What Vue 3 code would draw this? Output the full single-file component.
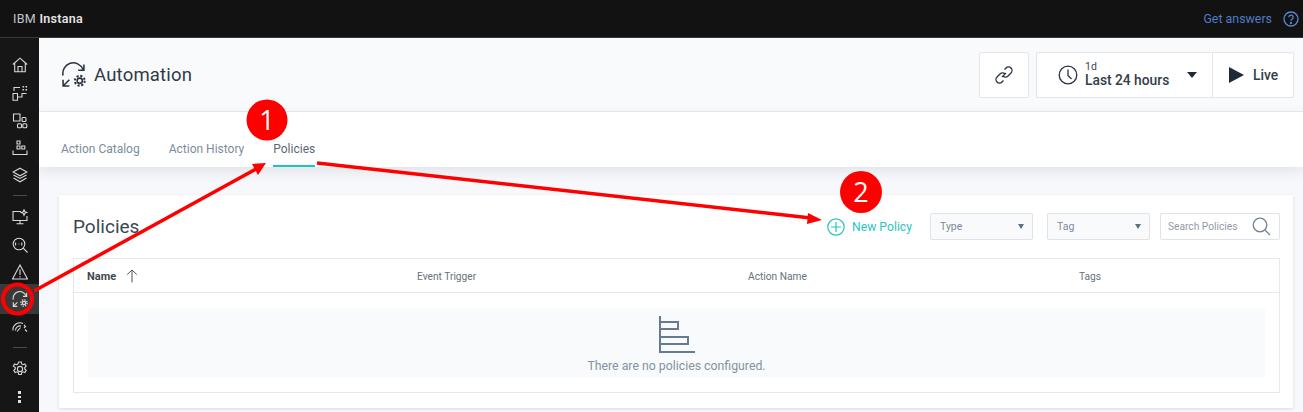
<script setup>
const rows = ['Name', 'Event Trigger', 'Action Name', 'Tags']
</script>

<template>
  <div class="app">
    <header class="topbar">
      <div class="brand">IBM <b>Instana</b></div>
      <div class="answers">
        <span>Get answers</span>
        <svg width="16" height="16" viewBox="0 0 16 16" fill="none" stroke="#5b87d0" stroke-width="1.3">
          <circle cx="8" cy="8" r="7" />
          <path d="M5.9 6.2a2.1 2.1 0 1 1 3.2 1.8c-.8.5-1.1.9-1.1 1.8" />
          <circle cx="8" cy="12" r=".5" fill="#5b87d0" />
        </svg>
      </div>
    </header>
    <div class="body">
      <nav class="side">
        <svg class="ni" viewBox="0 0 16 16"><path d="M.8 7.500 8 1.200 15.200 7.500M2.700 6V14.800H13.300V6M6 14.800V9.500H10V14.800" /></svg>
        <svg class="ni m12" viewBox="0 0 16 16"><path d="M1 8.500H5.500V15.200H1ZM5.500 12H10V8.500H14.500M2 6V2.500H8" /><path class="fillp" d="M10.500 1h1.600v1.600h-1.600zM13.500 1h1.600v1.600h-1.600zM10.500 4h1.600v1.600h-1.600zM13.500 4h1.600v1.600h-1.600z" /></svg>
        <svg class="ni m12" viewBox="0 0 16 16"><path d="M1.500 1H8V8H1.500Z" /><rect x="10" y="4.500" width="4" height="4" rx="1" /><rect x="5.500" y="10.800" width="4" height="4" rx="1" /><rect x="10.800" y="10.800" width="4" height="4" rx="1" /></svg>
        <svg class="ni m11" viewBox="0 0 16 16"><path d="M5 1H8V4H5ZM5 6H8V9H5ZM9.800 6H12.800V9H9.800ZM1 10.500V14.500H15V10.500" /></svg>
        <svg class="ni m11" viewBox="0 0 16 16"><path d="M8 1.200 15 5 8 8.800 1 5ZM1.500 8 8 11.500 14.500 8M1.500 11 8 14.800 14.500 11" /></svg>
        <div class="sep m12"></div>
        <svg class="ni m13" viewBox="0 0 16 16"><path d="M9 2.500H1V11.500H15V7M8 11.500V14.800M4.500 14.800H11.500" /><path d="m12 .8.8 2 2 .7-2 .8-.8 2-.8-2-2-.8 2-.7z" /></svg>
        <svg class="ni m12" viewBox="0 0 16 16"><circle cx="7" cy="7" r="5.800" /><path d="M11.200 11.200 15.500 15.500M3.600 5.500V8.500M6.600 7H7.400M9.800 5.500V8.500" /></svg>
        <svg class="ni m11" viewBox="0 0 16 16"><path d="M8 1 15.500 15H.5ZM8 5.500V11M8 12.300V13.500" /></svg>
        <div class="active">
          <svg class="ni thick" viewBox="0 0 24 24">
            <path d="M2 13A10 10 0 0 1 21 7M22 2.500V8H16.500M8 17 2 23M2 17V23H8" />
            <circle cx="18" cy="18" r="2.500" stroke-width="2" />
            <circle cx="18" cy="18" r="4.700" stroke-width="2" stroke-dasharray="2 1.690" />
          </svg>
        </div>
        <svg class="ni m4" viewBox="0 0 16 16"><path d="M1 12.500A7 7 0 0 1 11 5.500M3.500 12.500A4.500 4.500 0 0 1 9 8M5 13.500 8.500 9.500M12 7l1.500 1.500L12 10M13 11.500l2 2" /></svg>
        <div class="sep m13"></div>
        <svg class="ni m13" viewBox="0 0 16 16"><circle cx="8" cy="8" r="2.600" /><path d="M6.700 1h2.600l.4 2 1.300.7 1.900-.7 1.300 2.200-1.500 1.300v1.500l1.500 1.300-1.300 2.200-1.900-.7-1.300.7-.4 2H6.700l-.4-2-1.300-.7-1.900.7-1.300-2.200 1.500-1.300V6.500L1.300 5.200 2.600 3l1.900.7 1.300-.7z" /></svg>
        <div class="dots"><i></i><i></i><i></i></div>
      </nav>
      <main class="main">
        <section class="head">
          <div class="title">
            <svg class="auto" viewBox="0 0 24 24">
              <path d="M2 13A10 10 0 0 1 21 7M22 2.500V8H16.500M8 17 2 23M2 17V23H8" />
              <circle cx="18" cy="18" r="2.500" stroke-width="1.500" />
              <circle cx="18" cy="18" r="4.700" stroke-width="2" stroke-dasharray="2 1.690" />
            </svg>
            <h1>Automation</h1>
          </div>
          <div class="tools">
            <button class="tbox link">
              <svg width="22" height="22" viewBox="0 0 22 22" fill="none" stroke="#2a3440" stroke-width="1.300">
                <path d="m9 13 4-4M11.500 5.500l1.500-1.500a3.500 3.500 0 0 1 5 5l-3 3a3.500 3.500 0 0 1-5 0M10.500 16.500 9 18a3.500 3.500 0 0 1-5-5l3-3a3.500 3.500 0 0 1 5 0" />
              </svg>
            </button>
            <div class="tbox range">
              <svg width="20" height="20" viewBox="0 0 20 20" fill="none" stroke="#2a3440" stroke-width="1.300">
                <circle cx="10" cy="10" r="8.800" />
                <path d="M10 4.500V10.500L13.500 14" />
              </svg>
              <div class="rtext"><small>1d</small><strong>Last 24 hours</strong></div>
              <span class="caret big"></span>
            </div>
            <div class="tbox live">
              <svg width="16" height="16" viewBox="0 0 16 16"><path d="M1 0 16 8 1 16Z" fill="#1e2a38" /></svg>
              <strong>Live</strong>
            </div>
          </div>
        </section>
        <section class="tabs">
          <a>Action Catalog</a>
          <a>Action History</a>
          <a class="on">Policies</a>
        </section>
        <section class="content">
          <div class="card">
            <div class="cardhead">
              <h2>Policies</h2>
              <div class="filters">
                <a class="new">
                  <svg width="18" height="18" viewBox="0 0 18 18" fill="none" stroke="#22c5c0" stroke-width="1.200">
                    <circle cx="9" cy="9" r="8.200" />
                    <path d="M9 4V14M4 9H14" />
                  </svg>
                  New Policy
                </a>
                <div class="sel w103">Type<span class="caret"></span></div>
                <div class="sel w103 tag">Tag<span class="caret"></span></div>
                <div class="sel search">Search Policies
                  <svg width="19" height="19" viewBox="0 0 19 19" fill="none" stroke="#6f8398" stroke-width="1.300">
                    <circle cx="8" cy="8" r="6.800" />
                    <path d="m13 13 5 5" />
                  </svg>
                </div>
              </div>
            </div>
            <div class="table">
              <div class="thead">
                <div v-for="(r, i) in rows" :key="r" class="th" :class="{ first: i === 0 }">
                  {{ r }}
                  <svg v-if="i === 0" width="12" height="14" viewBox="0 0 12 14" fill="none" stroke="#4a5560" stroke-width="1"><path d="M6 13.500V1M1.200 5.500 6 1l4.800 4.500" /></svg>
                </div>
              </div>
              <div class="tbody">
                <div class="empty">
                  <svg width="38" height="38" viewBox="0 0 38 38" fill="none" stroke="#647b91" stroke-width="2">
                    <path d="M2 0V36H37M2 6H20V13H2M2 21H30V28H2" />
                  </svg>
                  <p>There are no policies configured.</p>
                </div>
              </div>
            </div>
          </div>
        </section>
      </main>
    </div>

    <svg class="overlay" width="1303" height="412" viewBox="0 0 1303 412">
      <circle cx="17.500" cy="299" r="14.500" fill="none" stroke="#ff0000" stroke-width="4" />
      <path d="M34 291 256 169" stroke="#ff0000" stroke-width="3.500" fill="none" />
      <path d="m266 163-14 1 6 11z" fill="#ff0000" />
      <path d="M317 163 811 218" stroke="#ff0000" stroke-width="3.500" fill="none" />
      <path d="m822 220-14-7-1 11z" fill="#ff0000" />
      <circle cx="267" cy="120" r="20.500" fill="#ff0000" />
      <circle cx="861" cy="192" r="21" fill="#ff0000" />
      <text x="267" y="130" class="num">1</text>
      <text x="861" y="202" class="num">2</text>
    </svg>
  </div>
</template>

<style scoped>
.app {
  position: relative;
  width: 1303px;
  height: 412px;
  overflow: hidden;
  font-family: Roboto, "Noto Sans", sans-serif;
  color: #2a3440;
  background: #f7f8fb;
}
.topbar {
  height: 37px;
  background: #121212;
  border-bottom: 1px solid #3a3a3a;
  display: flex;
  align-items: center;
  justify-content: space-between;
  padding: 0 4px 0 13px;
}
.brand { color: #c6c6c6; font-size: 12.500px; letter-spacing: .3px; }
.brand b { color: #e4e4e4; font-weight: 600; }
.answers { display: flex; align-items: center; gap: 11px; color: #4f7cc4; font-size: 12.400px; }
.body { display: flex; height: 374px; }
.side {
  width: 39px;
  flex: none;
  background: #161616;
  display: flex;
  flex-direction: column;
  align-items: center;
  padding-top: 19px;
}
.ni { width: 16px; height: 16px; fill: none; stroke: #d8d8d8; stroke-width: 1.100; flex: none; }
.ni.thick { stroke-width: 1.700; }
.ni .fillp { fill: #d8d8d8; stroke: none; }
.m4 { margin-top: 4px; }
.m11 { margin-top: 11px; }
.m12 { margin-top: 12px; }
.m13 { margin-top: 13px; }
.sep { width: 14px; height: 1px; background: #4a4a4a; flex: none; }
.active {
  width: 39px;
  height: 30px;
  margin-top: 4px;
  background: #393939;
  display: flex;
  align-items: center;
  justify-content: center;
  flex: none;
}
.dots { display: flex; flex-direction: column; gap: 2px; margin-top: 14px; }
.dots i { width: 2.500px; height: 2.500px; background: #e0e0e0; display: block; }
.main { flex: 1; min-width: 0; display: flex; flex-direction: column; }
.head {
  height: 74px;
  flex: none;
  background: #f9fafc;
  border-bottom: 1px solid #e9ebee;
  box-sizing: border-box;
  display: flex;
  align-items: center;
  justify-content: space-between;
  padding: 0 9px 0 22px;
}
.title { display: flex; align-items: center; gap: 8px; }
.auto { width: 25px; height: 25px; fill: none; stroke: #2a3440; stroke-width: 1.500; }
h1 { margin: 0; font-size: 18.500px; font-weight: 400; color: #2f3b47; letter-spacing: .2px; }
.tools { display: flex; gap: 7px; }
.tbox {
  height: 46px;
  box-sizing: border-box;
  background: #fff;
  border: 1px solid #e2e5e9;
  border-radius: 2px;
  display: flex;
  align-items: center;
  padding: 0;
}
.link { width: 50px; justify-content: center; }
.range { width: 176px; padding-left: 21px; gap: 7px; border-right: 0; border-radius: 2px 0 0 2px; }
.rtext { display: flex; flex-direction: column; line-height: 12px; }
.rtext small { font-size: 10.500px; color: #3b4650; }
.rtext strong { font-size: 13.800px; font-weight: 500; color: #323d48; line-height: 15px; }
.caret {
  width: 0;
  height: 0;
  border-left: 3.500px solid transparent;
  border-right: 3.500px solid transparent;
  border-top: 5px solid #5e6f80;
}
.caret.big { border-left-width: 5px; border-right-width: 5px; border-top-width: 6px; border-top-color: #1e2a38; margin-left: 11px; }
.live { width: 82px; margin-left: -7px; gap: 9px; padding-left: 15px; border-radius: 0 2px 2px 0; }
.live strong { font-size: 13.800px; font-weight: 500; color: #323d48; }
.tabs {
  height: 55px;
  flex: none;
  background: #fff;
  display: flex;
  padding-left: 22px;
  gap: 29px;
  box-shadow: 0 4px 12px rgba(30, 40, 60, .1);
  position: relative;
  font-size: 12px;
  color: #7d8c9c;
}
.tabs a { display: flex; align-items: center; height: 55px; box-sizing: border-box; padding-top: 21px; border-bottom: 2px solid transparent; }
.tabs .on { color: #5b6a78; border-bottom-color: #19c5c0; }
.content { flex: 1; padding: 28px 10px 0 20px; }
.card {
  height: 213px;
  box-sizing: border-box;
  background: #fff;
  box-shadow: 0 1px 3px rgba(30, 40, 60, .14);
  padding: 0 13px 0 14px;
}
.cardhead { height: 63px; display: flex; align-items: center; justify-content: space-between; }
h2 { margin: 0; font-size: 19px; font-weight: 400; color: #3a4753; margin-top: -1px; }
.filters { display: flex; align-items: center; gap: 11px; }
.new { display: flex; align-items: center; gap: 7px; color: #2dc4bf; font-size: 12.200px; margin-right: 7px; padding-top: 1px; }
.sel {
  height: 27px;
  box-sizing: border-box;
  background: #f9fafc;
  border: 1px solid #dfe3e7;
  border-radius: 2px;
  display: flex;
  align-items: center;
  justify-content: space-between;
  padding: 0 8px 0 9px;
  font-size: 10.500px;
  color: #7c8a98;
}
.w103 { width: 103px; }
.tag { margin-left: 3px; }
.search { width: 120px; background: #fff; padding: 0 8px 0 7px; margin-left: -1px; color: #8f9ba7; font-size: 10.200px; }
.table { height: 135px; box-sizing: border-box; border: 1px solid #e6e8ea; }
.thead { height: 34px; box-sizing: border-box; border-bottom: 1px solid #e6e8ea; display: grid; grid-template-columns: 330px 331px 331px 1fr; align-items: center; font-size: 10.200px; color: #66727e; padding-top: 1px; }
.th.first { padding-left: 13px; font-weight: 700; color: #3c4854; font-size: 11px; display: flex; align-items: center; gap: 10px; }
.th:nth-child(2) { padding-left: 13px; }
.th:nth-child(3) { padding-left: 13px; }
.th:nth-child(4) { padding-left: 13px; }
.tbody { padding: 15px 14px 0; }
.empty { height: 69px; background: #f9fafc; display: flex; flex-direction: column; align-items: center; padding-top: 8px; box-sizing: border-box; }
.empty p { margin: 5px 0 0; font-size: 12.300px; color: #8492a1; }
.overlay { position: absolute; left: 0; top: 0; pointer-events: none; }
.num { font-family: "Open Sans", sans-serif; font-size: 27px; font-weight: 500; fill: #fff; text-anchor: middle; }
</style>
